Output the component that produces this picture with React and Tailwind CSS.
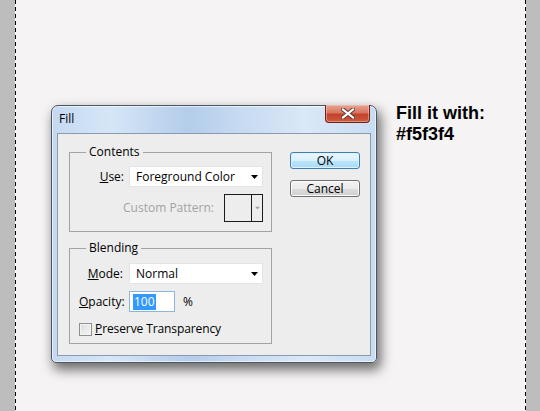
import React from 'react'

const UI_FONT = "font-['Open_Sans',sans-serif]"

function Caret({ className = '' }) {
  return (
    <svg width="7" height="4" viewBox="0 0 7 4" className={className}>
      <path d="M0 0h7L3.5 4z" fill="currentColor" />
    </svg>
  )
}

function Select({ value, className = '' }) {
  return (
    <div className={`flex items-center justify-between h-[21px] bg-white border border-[#e4e4e4] pl-[6px] pr-[4px] ${className}`}>
      <span>{value}</span>
      <Caret className="text-black" />
    </div>
  )
}

function Button({ children, isDefault }) {
  return (
    <div
      className={`flex items-center justify-center w-[70px] h-[17px] rounded-[3px] border leading-none ${
        isDefault
          ? 'border-[#3c7fb1] bg-[linear-gradient(#eaf6fd_0%,#d9f0fc_50%,#bee6fd_51%,#a7d9f5_100%)] shadow-[inset_0_0_0_1px_#dff2fc]'
          : 'border-[#707070] bg-[linear-gradient(#f2f2f2_0%,#ebebeb_50%,#dddddd_51%,#cfcfcf_100%)] shadow-[inset_0_0_0_1px_#fcfcfc]'
      }`}
    >
      {children}
    </div>
  )
}

function Group({ title, children }) {
  return (
    <fieldset className="border border-[#a3a3a3] w-[203px]">
      <legend className="ml-[16px] px-[3px] leading-[16px]">{title}</legend>
      {children}
    </fieldset>
  )
}

function DashedLine() {
  return <div className="w-px shrink-0 bg-[repeating-linear-gradient(to_bottom,#000_0_4px,#fff_4px_7px)]" />
}

export default function App() {
  return (
    <div className="flex w-[540px] h-[411px] overflow-hidden bg-[#bdbdbd]">
      <div className="w-[15px] shrink-0" />
      <DashedLine />

      {/* canvas */}
      <div className="flex-1 flex items-start bg-[#f5f3f4] pt-[105px] pl-[35px]">
        {/* Fill dialog */}
        <div className="w-[326px] rounded-t-[7px] rounded-b-[5px] border border-[#4b5563] bg-[linear-gradient(to_right,#c4d9f1_0%,#d6e6f7_18%,#b4cdea_42%,#c3d8f0_55%,#dae8f7_78%,#c8dcf2_100%)] px-[5px] pb-[6px] shadow-[3px_6px_12px_1px_rgba(0,0,0,0.55),inset_0_0_0_1px_rgba(255,255,255,0.6)]">
          <div className="flex items-start justify-between h-[27px]">
            <span className={`${UI_FONT} text-[12px] leading-[16px] text-black pt-[5px] pl-[2px]`}>Fill</span>
            <div className="flex items-center justify-center w-[45px] h-[18px] -mt-px mr-[1px] rounded-b-[4px] border border-[#6b2417] border-t-0 bg-[linear-gradient(#e8a494_0%,#d8765f_45%,#c2412a_55%,#cf5a3f_100%)] shadow-[inset_0_0_0_1px_rgba(255,210,200,0.45)]">
              <svg width="14" height="11" viewBox="0 0 14 11">
                <path d="M2 1.5l10 8M12 1.5l-10 8" stroke="#5b3a36" strokeWidth="4" strokeLinecap="square" />
                <path d="M2 1.5l10 8M12 1.5l-10 8" stroke="#fff" strokeWidth="2.2" strokeLinecap="square" />
              </svg>
            </div>
          </div>

          {/* content panel */}
          <div className={`${UI_FONT} flex border border-[#8c9aad] bg-[#ededed] pl-[11px] pt-[10px] pb-[11px] text-[12px] leading-[16px] text-black`}>
            <div className="flex flex-col gap-[8px]">
              <Group title="Contents">
                <div className="flex flex-col gap-[7px] pt-[6px] pr-[8px] pb-[9px]">
                  <div className="flex items-center justify-end gap-[5px]">
                    <span><span className="underline">U</span>se:</span>
                    <Select value="Foreground Color" className="w-[134px]" />
                  </div>
                  <div className="flex items-center justify-end gap-[10px]">
                    <span className="text-[#a3a3a3]">Custom Pattern:</span>
                    <div className="flex w-[39px] h-[28px] border border-[#1b1b1b]">
                      <div className="flex-1" />
                      <div className="flex items-center justify-center w-[11px] border-l border-[#1b1b1b]">
                        <Caret className="text-[#a0a0a0] scale-75" />
                      </div>
                    </div>
                  </div>
                </div>
              </Group>

              <Group title="Blending">
                <div className="grid grid-cols-[44px_1fr] items-center gap-x-[6px] gap-y-[7px] pt-[7px] pl-[9px] pr-[8px] pb-[6px]">
                  <span className="text-right"><span className="underline">M</span>ode:</span>
                  <Select value="Normal" />

                  <span><span className="underline">O</span>pacity:</span>
                  <div className="flex items-center gap-[8px]">
                    <div className="flex items-center w-[46px] h-[21px] bg-white border border-[#8fb4dc] pl-[3px]">
                      <span className="bg-[#3399ff] text-white px-px">100</span>
                    </div>
                    <span>%</span>
                  </div>

                  <div className="col-span-2 flex items-center gap-[3px] mt-[2px]">
                    <div className="w-[13px] h-[13px] border border-[#8e8f8f] bg-[linear-gradient(135deg,#dcdcdc,#f6f6f6)] shadow-[inset_0_0_0_1px_#f4f4f4]" />
                    <span className="tracking-[-0.1px]"><span className="underline">P</span>reserve Transparency</span>
                  </div>
                </div>
              </Group>
            </div>

            <div className="flex flex-col gap-[11px] ml-[18px] pt-[8px]">
              <Button isDefault>OK</Button>
              <Button>Cancel</Button>
            </div>
          </div>
        </div>

        <div className="ml-[19px] -mt-[2px] font-['Liberation_Sans',Arial,sans-serif] font-bold text-[18px] leading-[21px] text-black">
          <div>Fill it with:</div>
          <div>#f5f3f4</div>
        </div>
      </div>

      <DashedLine />
      <div className="w-[14px] shrink-0" />
    </div>
  )
}
